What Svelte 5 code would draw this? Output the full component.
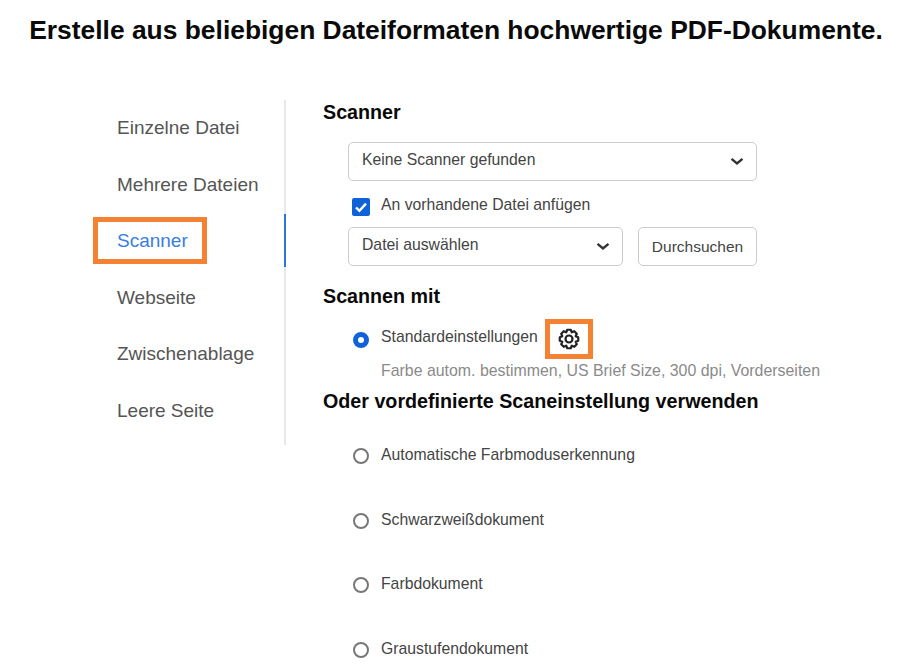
<script>
  const navItems = ['Einzelne Datei', 'Mehrere Dateien', 'Scanner', 'Webseite', 'Zwischenablage', 'Leere Seite'];
  const presets = ['Automatische Farbmoduserkennung', 'Schwarzweißdokument', 'Farbdokument', 'Graustufendokument'];

  function gearPath(teeth, outer, inner, c) {
    const pts = [];
    const step = (Math.PI * 2) / teeth;
    for (let i = 0; i < teeth; i++) {
      const a = i * step - Math.PI / 2;
      for (const [r, da] of [[inner, -0.5], [outer, -0.24], [outer, 0.24], [inner, 0.5]]) {
        const t = a + da * step;
        pts.push(`${(c + r * Math.cos(t)).toFixed(2)} ${(c + r * Math.sin(t)).toFixed(2)}`);
      }
    }
    return 'M' + pts.join('L') + 'Z';
  }
  const gear = gearPath(8, 9.4, 7.2, 11);
</script>

<div class="page">
  <h1>Erstelle aus beliebigen Dateiformaten hochwertige PDF-Dokumente.</h1>
  <div class="main">
    <nav class="side">
      {#each navItems as item}
        <div class="nav" class:active={item === 'Scanner'}>
          {#if item === 'Scanner'}<span class="hl">{item}</span>{:else}{item}{/if}
        </div>
      {/each}
    </nav>
    <section class="content">
      <h2 class="h-scanner">Scanner</h2>
      <div class="select wide">
        <span>Keine Scanner gefunden</span>
        <svg class="chev" width="14" height="9" viewBox="0 0 14 9"><path d="M1.5 1.8l5.5 4.7 5.5-4.7" fill="none" stroke="#333" stroke-width="2.4"/></svg>
      </div>
      <div class="check-row">
        <span class="check"><svg width="18" height="18" viewBox="0 0 18 18"><path d="M4 9.5l3.4 3.2L14 5.6" fill="none" stroke="#fff" stroke-width="2.4"/></svg></span>
        <span class="label">An vorhandene Datei anfügen</span>
      </div>
      <div class="file-row">
        <div class="select file">
          <span>Datei auswählen</span>
          <svg class="chev" width="14" height="9" viewBox="0 0 14 9"><path d="M1.5 1.8l5.5 4.7 5.5-4.7" fill="none" stroke="#333" stroke-width="2.4"/></svg>
        </div>
        <div class="btn">Durchsuchen</div>
      </div>
      <h2 class="h-mit">Scannen mit</h2>
      <div class="std-row">
        <span class="radio on"></span>
        <span class="label">Standardeinstellungen</span>
        <span class="gear">
          <svg width="22" height="22" viewBox="0 0 22 22" fill="none" stroke="#222" stroke-width="2.2" stroke-linejoin="round">
            <path d={gear}/>
            <circle cx="11" cy="11" r="3.5"/>
          </svg>
        </span>
      </div>
      <div class="desc">Farbe autom. bestimmen, US Brief Size, 300 dpi, Vorderseiten</div>
      <h2 class="h-oder">Oder vordefinierte Scaneinstellung verwenden</h2>
      <div class="presets">
        {#each presets as p}
          <div class="preset"><span class="radio"></span><span class="label">{p}</span></div>
        {/each}
      </div>
    </section>
  </div>
</div>

<style>
  :global(body) { margin: 0; background: #fff; }
  .page { width: 908px; height: 671px; overflow: hidden; font-family: "Liberation Sans", Arial, sans-serif; color: #444; }
  h1 { margin: 0 0 0 4px; padding-top: 16px; text-align: center; font-size: 26.4px; line-height: 28px; font-weight: 700; color: #0a0a0a; white-space: nowrap; }
  .main { display: flex; margin-top: 56px; }
  .side { width: 192px; margin-left: 94px; height: 345px; box-sizing: border-box; border-right: 2px solid #e8e8e8; }
  .nav { height: 56.5px; line-height: 56.5px; padding-left: 23px; font-size: 19px; color: #555; position: relative; margin-right: -2px; }
  .nav.active { color: #3a7ee0; }
  .nav.active::after { content: ""; position: absolute; right: 0; top: 1px; width: 2px; height: 53px; background: #2f74de; }
  .hl { position: absolute; left: -1px; top: 4px; width: 114px; height: 47px; box-sizing: border-box; border: 5px solid #f58232; padding-left: 19px; line-height: 38px; }
  .content { margin-left: 37px; flex: 1; }
  h2 { margin: 0; font-size: 19.7px; font-weight: 700; color: #0a0a0a; line-height: 22px; white-space: nowrap; }
  .h-scanner { margin-top: 1px; }
  .select { box-sizing: border-box; height: 39px; border: 1.5px solid #ccc; border-radius: 5px; display: flex; align-items: center; justify-content: space-between; padding: 0 12px 4px 13px; font-size: 15.75px; color: #444; }
  .wide { width: 409px; margin: 19px 0 0 25px; }
  .chev { margin-top: 4px; }
  .check-row { display: flex; margin: 13px 0 0 29px; align-items: flex-start; height: 22px; }
  .check { width: 18px; height: 18px; background: #0f62d8; border-radius: 2px; margin-top: 4px; display: block; }
  .check svg { display: block; }
  .label { font-size: 15.75px; color: #444; white-space: nowrap; }
  .check-row .label { margin-left: 11px; line-height: 20px; margin-top: 1px; }
  .file-row { display: flex; gap: 15px; margin: 11px 0 0 25px; }
  .file { width: 275px; }
  .btn { box-sizing: border-box; width: 119px; height: 39px; border: 1.5px solid #ccc; border-radius: 5px; font-size: 15.5px; color: #444; display: flex; align-items: center; justify-content: center; }
  .h-mit { margin-top: 19px; }
  .radio { box-sizing: border-box; width: 16px; height: 16px; border-radius: 50%; border: 2.5px solid #777; display: block; flex: none; }
  .radio.on { border: 5px solid #0f62d8; background: #fff; }
  .std-row { display: flex; align-items: flex-start; margin: 12px 0 0 30px; height: 40px; }
  .std-row .radio { margin-top: 13px; }
  .std-row .label { margin: 8px 0 0 12px; line-height: 20px; }
  .gear { margin-left: 7px; box-sizing: border-box; width: 48px; height: 40px; border: 5px solid #f58232; display: flex; align-items: center; justify-content: center; }
  .desc { margin: 2px 0 0 58px; font-size: 15.9px; line-height: 20px; color: #8a8a8a; white-space: nowrap; }
  .h-oder { margin-top: 9px; }
  .presets { margin-top: 24px; }
  .preset { display: flex; height: 64.7px; margin-left: 30px; align-items: flex-start; }
  .preset .radio { margin-top: 12px; }
  .preset .label { margin-left: 12px; line-height: 20px; margin-top: 9px; }
</style>
